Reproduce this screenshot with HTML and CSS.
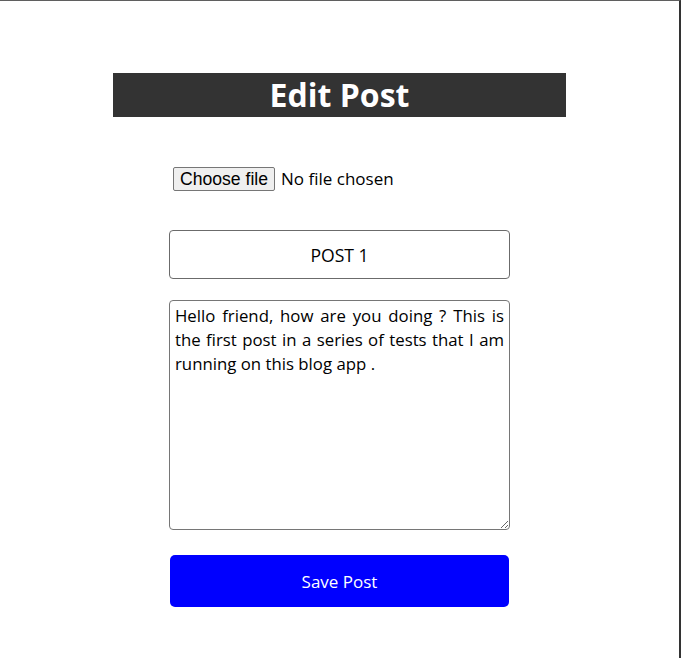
FILE: index.html
```html
<!DOCTYPE html>
<html lang="en">
<head>
<meta charset="utf-8">
<title>Edit Post</title>
<link rel="stylesheet" href="styles.css">
</head>
<body>
<div class="frame">
  <div class="container">
    <h1 class="title">Edit Post</h1>
    <form class="post-form">
      <div class="file-row">
        <span class="file-btn">Choose file</span>
        <span class="file-status">No file chosen</span>
      </div>
      <input class="title-input" type="text" value="POST 1">
      <textarea class="body-input">Hello friend, how are you doing ? This is the first post in a series of tests that I am running on this blog app .</textarea>
      <button class="save-btn" type="button">Save Post</button>
    </form>
  </div>
</div>
</body>
</html>
```
FILE: styles.css
```css
html, body {
  margin: 0;
  padding: 0;
  background: #fff;
}
.frame {
  width: 681px;
  height: 658px;
  box-sizing: border-box;
  border-top: 1px solid #5f5f5f;
  border-right: 2px solid #333;
  font-family: "Open Sans", "Noto Sans", sans-serif;
  font-size: 17.6px;
  color: #000;
  overflow: hidden;
}
.container {
  width: 453px;
  margin: 72px auto 0 113px;
}
.title {
  margin: 0;
  height: 44px;
  line-height: 44px;
  background: #333;
  color: #fff;
  text-align: center;
  font-size: 32px;
  font-weight: 700;
}
.post-form {
  width: 341px;
  margin: 49px 0 0 56px;
  display: flex;
  flex-direction: column;
}
.file-row {
  display: flex;
  align-items: center;
  gap: 6px;
  padding-left: 4px;
  height: 25px;
}
.file-btn {
  font-family: "Liberation Sans", Arial, sans-serif;
  font-size: 17.6px;
  line-height: 20px;
  padding: 1px 6px;
  background: #efefef;
  border: 1px solid #767676;
  border-radius: 2px;
  color: #000;
}
.file-status {
  font-size: 17px;
}
.title-input {
  margin-top: 39px;
  height: 49px;
  box-sizing: border-box;
  border: 1px solid #6b6b6b;
  border-radius: 4px;
  text-align: center;
  font-family: inherit;
  font-size: 17.6px;
  color: #000;
  padding: 0 8px;
}
.body-input {
  margin-top: 21px;
  height: 230px;
  box-sizing: border-box;
  border: 1px solid #767676;
  border-radius: 4px;
  padding: 3px 5px;
  font-family: inherit;
  font-size: 16.8px;
  line-height: 24px;
  text-align: justify;
  color: #000;
  resize: vertical;
}
.save-btn {
  margin: 25px 1px 0;
  height: 52px;
  border: 0;
  border-radius: 5px;
  background: #0000ff;
  color: #fff;
  font-family: inherit;
  font-size: 17px;
}
```
